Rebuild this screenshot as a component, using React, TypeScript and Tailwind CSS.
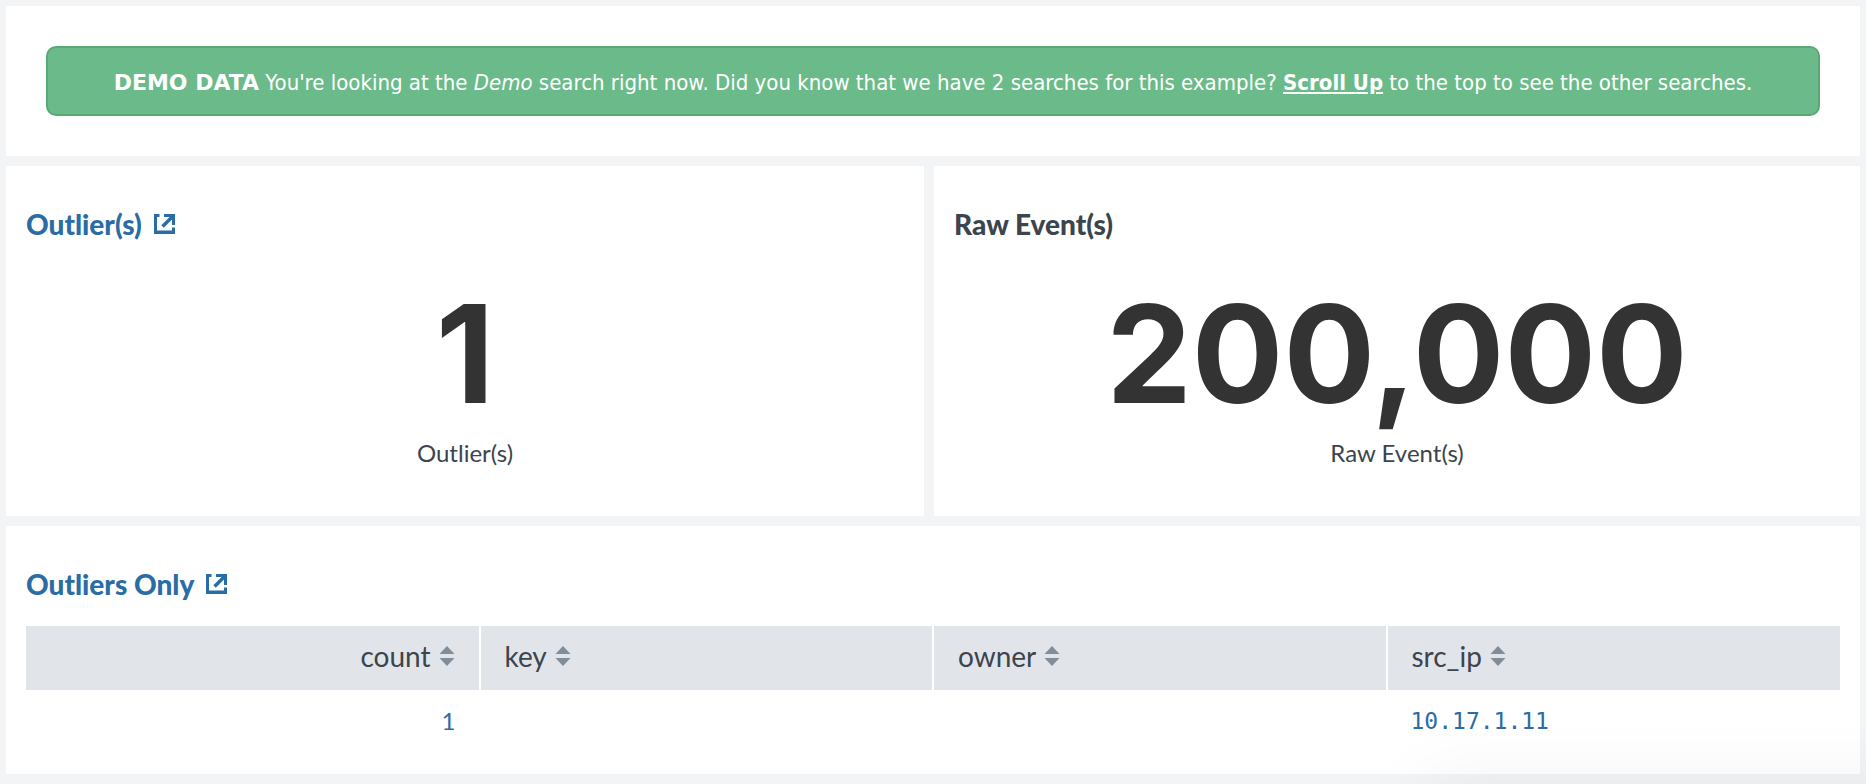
import type { ReactNode } from "react";

function ExternalIcon() {
  return (
    <svg viewBox="0 0 21 20" className="h-5 w-[21px] shrink-0" fill="currentColor" aria-hidden="true">
      <path d="M0 0H5.5V3H3V16.5H18V13.5H21V20H0Z" />
      <path d="M10 0H21V11H18V5.6L9.8 13.8L7.3 11.3L15.6 3H10Z" />
    </svg>
  );
}

function SortIcon() {
  return (
    <svg viewBox="0 0 16 20" className="h-5 w-4 shrink-0" fill="#818d99" aria-hidden="true">
      <path d="M8 0L15.5 8H0.5Z" />
      <path d="M8 20L15.5 12H0.5Z" />
    </svg>
  );
}

function PanelTitle({ children, linked = false }: { children: ReactNode; linked?: boolean }) {
  return (
    <h2 className="text-[28px] leading-9 font-black text-[#3c444d]">
      {linked ? (
        <a href="#search" className="inline-flex items-center gap-3 text-[#2a6ca5]">
          {children}
          <ExternalIcon />
        </a>
      ) : (
        children
      )}
    </h2>
  );
}

function SingleValue({ title, value, linked }: { title: string; value: string; linked?: boolean }) {
  return (
    <section className="bg-white px-5 pt-10 pb-12">
      <PanelTitle linked={linked}>{title}</PanelTitle>
      <div className="pt-9 text-center">
        <p className="font-['Inter',sans-serif] text-[136px] leading-[152px] font-bold text-[#333333]">{value}</p>
        <p className="pt-2 text-2xl leading-[30px] text-[#3c444d]">{title}</p>
      </div>
    </section>
  );
}

const columns = ["count", "key", "owner", "src_ip"];

export default function App() {
  return (
    <main className="relative flex min-h-screen flex-col gap-2.5 overflow-hidden bg-[#f2f4f5] p-1.5 pb-2.5 font-['Lato',sans-serif]">
      <section className="bg-white p-10">
        <p className="rounded-[10px] border-2 border-[#5ba877] bg-[#6bbb8a] px-6 pt-5 pb-4 text-center font-['DejaVu_Sans_Condensed',sans-serif] text-[22px] leading-[30px] text-white">
          <strong className="font-['DejaVu_Sans',sans-serif]">DEMO DATA</strong> You're looking at the <em>Demo</em> search
          right now. Did you know that we have 2 searches for this example?{" "}
          <a href="#top" className="font-bold underline">
            Scroll Up
          </a>{" "}
          to the top to see the other searches.
        </p>
      </section>

      <div className="grid grid-cols-[918fr_926fr] gap-2.5">
        <SingleValue title="Outlier(s)" value="1" linked />
        <SingleValue title="Raw Event(s)" value="200,000" />
      </div>

      <section className="bg-white p-5 pt-10">
        <PanelTitle linked>Outliers Only</PanelTitle>
        <table className="mt-6 w-full table-fixed border-collapse text-left">
          <thead>
            <tr className="h-16 bg-[#e1e5ea]">
              {columns.map((name) => (
                <th
                  key={name}
                  scope="col"
                  className="border-l-2 border-white px-6 pb-1 text-[28px] leading-9 font-normal text-[#3c444d] first:border-l-0 first:text-right"
                >
                  <button type="button" className="inline-flex items-center gap-2">
                    {name}
                    <SortIcon />
                  </button>
                </th>
              ))}
            </tr>
          </thead>
          <tbody>
            <tr className="h-16 text-2xl text-[#2a6ca5]">
              <td className="px-6 pb-0.5 text-right">1</td>
              <td />
              <td />
              <td className="px-6 pb-0.5 font-['DejaVu_Sans_Mono',monospace] text-[23px]">10.17.1.11</td>
            </tr>
          </tbody>
        </table>
      </section>

      {/* soft shadow rising from the bottom right corner */}
      <div
        aria-hidden="true"
        className="pointer-events-none absolute top-full -right-24 h-24 w-[540px] shadow-[0_0_80px_rgba(0,0,0,0.06)]"
      />
    </main>
  );
}
